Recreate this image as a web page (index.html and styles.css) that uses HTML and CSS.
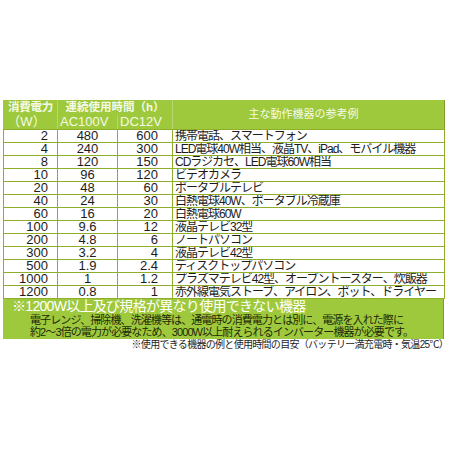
FILE: index.html
```html
<!DOCTYPE html>
<html lang="ja">
<head>
<meta charset="utf-8">
<link rel="stylesheet" href="styles.css">
</head>
<body>
<div class="sheet">
  <table class="spec">
    <colgroup><col class="c-w"><col class="c-ac"><col class="c-dc"><col class="c-dev"></colgroup>
    <thead>
      <tr class="h1">
        <th class="hw">消費電力</th>
        <th colspan="2" class="hh">連続使用時間（h）</th>
        <th rowspan="2" class="hdev">主な動作機器の参考例</th>
      </tr>
      <tr class="h2">
        <th class="hw2">（W）</th>
        <th class="hv">AC100V</th>
        <th class="hv">DC12V</th>
      </tr>
    </thead>
    <tbody>
      <tr><td class="w">2</td><td class="ac">480</td><td class="dc">600</td><td class="dev">携帯電話、スマートフォン</td></tr>
      <tr><td class="w">4</td><td class="ac">240</td><td class="dc">300</td><td class="dev">LED電球40W相当、液晶TV、iPad、モバイル機器</td></tr>
      <tr><td class="w">8</td><td class="ac">120</td><td class="dc">150</td><td class="dev">CDラジカセ、LED電球60W相当</td></tr>
      <tr><td class="w">10</td><td class="ac">96</td><td class="dc">120</td><td class="dev">ビデオカメラ</td></tr>
      <tr><td class="w">20</td><td class="ac">48</td><td class="dc">60</td><td class="dev">ポータブルテレビ</td></tr>
      <tr><td class="w">40</td><td class="ac">24</td><td class="dc">30</td><td class="dev">白熱電球40W、ポータブル冷蔵庫</td></tr>
      <tr><td class="w">60</td><td class="ac">16</td><td class="dc">20</td><td class="dev">白熱電球60W</td></tr>
      <tr><td class="w">100</td><td class="ac">9.6</td><td class="dc">12</td><td class="dev">液晶テレビ32型</td></tr>
      <tr><td class="w">200</td><td class="ac">4.8</td><td class="dc">6</td><td class="dev">ノートパソコン</td></tr>
      <tr><td class="w">300</td><td class="ac">3.2</td><td class="dc">4</td><td class="dev">液晶テレビ42型</td></tr>
      <tr><td class="w">500</td><td class="ac">1.9</td><td class="dc">2.4</td><td class="dev">ディスクトップパソコン</td></tr>
      <tr><td class="w">1000</td><td class="ac">1</td><td class="dc">1.2</td><td class="dev">プラズマテレビ42型、オーブントースター、炊飯器</td></tr>
      <tr><td class="w">1200</td><td class="ac">0.8</td><td class="dc">1</td><td class="dev">赤外線電気ストーブ、アイロン、ポット、ドライヤー</td></tr>
    </tbody>
  </table>
  <div class="note">
    <p class="note-title">※1200W以上及び規格が異なり使用できない機器</p>
    <p class="note-text">電子レンジ、掃除機、洗濯機等は、通電時の消費電力とは別に、電源を入れた際に</p>
    <p class="note-text">約2～3倍の電力が必要なため、3000W以上耐えられるインバーター機器が必要です。</p>
  </div>
  <p class="foot">※使用できる機器の例と使用時間の目安（バッテリー満充電時・気温25℃）</p>
</div>
</body>
</html>
```

FILE: styles.css
```css
html, body {
  margin: 0;
  padding: 0;
  background: #ffffff;
}
body {
  font-family: "Liberation Sans", "Noto Sans CJK JP", sans-serif;
  color: #1c1c1c;
}
.sheet {
  width: 441px;
  padding: 100px 0 0 3px;
}
.spec {
  width: 441px;
  border-collapse: collapse;
  table-layout: fixed;
  border-right: 1px solid #7f9c2c;
}
.c-w { width: 54px; }
.c-ac { width: 60px; }
.c-dc { width: 55px; }
.c-dev { width: 272px; }

.spec th {
  background: #9fc93d;
  color: #f4fae6;
  padding: 0;
  border-left: 1px solid #b7d672;
  white-space: nowrap;
  overflow: hidden;
}
.spec th:first-child { border-left: 1px solid #9fc93d; }
.h1 th {
  height: 15px;
  line-height: 15px;
  font-size: 11.5px;
  font-weight: bold;
}
.h2 th {
  height: 14px;
  line-height: 14px;
  font-size: 13px;
  font-weight: normal;
  border-bottom: 1px solid #8fae2b;
}
.hw { text-align: center; letter-spacing: -0.3px; }
.hh { text-align: center; }
.h2 th.hw2 { text-align: center; padding-right: 8px; }
.h2 th.hv { text-align: left; padding-left: 2px; }
.h1 th.hdev {
  font-size: 11px;
  font-weight: normal;
  text-align: center;
  padding-right: 10px;
  border-bottom: 1px solid #8fae2b;
}

.spec td {
  border: 1px solid #8fae2b;
  height: 12px;
  line-height: 12px;
  padding: 0;
  font-size: 13px;
  white-space: nowrap;
  overflow: hidden;
}
.spec td.w { text-align: right; padding-right: 9px; }
.spec td.ac { text-align: center; }
.spec td.dc { text-align: right; padding-right: 14px; }
.spec td.dev {
  text-align: left;
  padding-left: 2px;
  font-size: 12px;
  letter-spacing: -1px;
}

.note {
  background: #9fc93d;
  width: 441px;
  height: 40px;
  border-right: 1px solid #7f9c2c;
  box-sizing: border-box;
  color: #ffffff;
}
.note p { margin: 0; white-space: nowrap; }
.note-title {
  font-size: 14px;
  line-height: 15px;
  letter-spacing: -0.7px;
  padding-left: 9px;
}
.note-text {
  font-size: 11px;
  line-height: 12px;
  letter-spacing: -0.9px;
  padding-left: 27px;
  color: #1e2a08;
}
.foot {
  margin: 0 -4px 0 0;
  text-align: right;
  font-size: 10px;
  line-height: 12px;
  letter-spacing: -0.7px;
  white-space: nowrap;
}
```
